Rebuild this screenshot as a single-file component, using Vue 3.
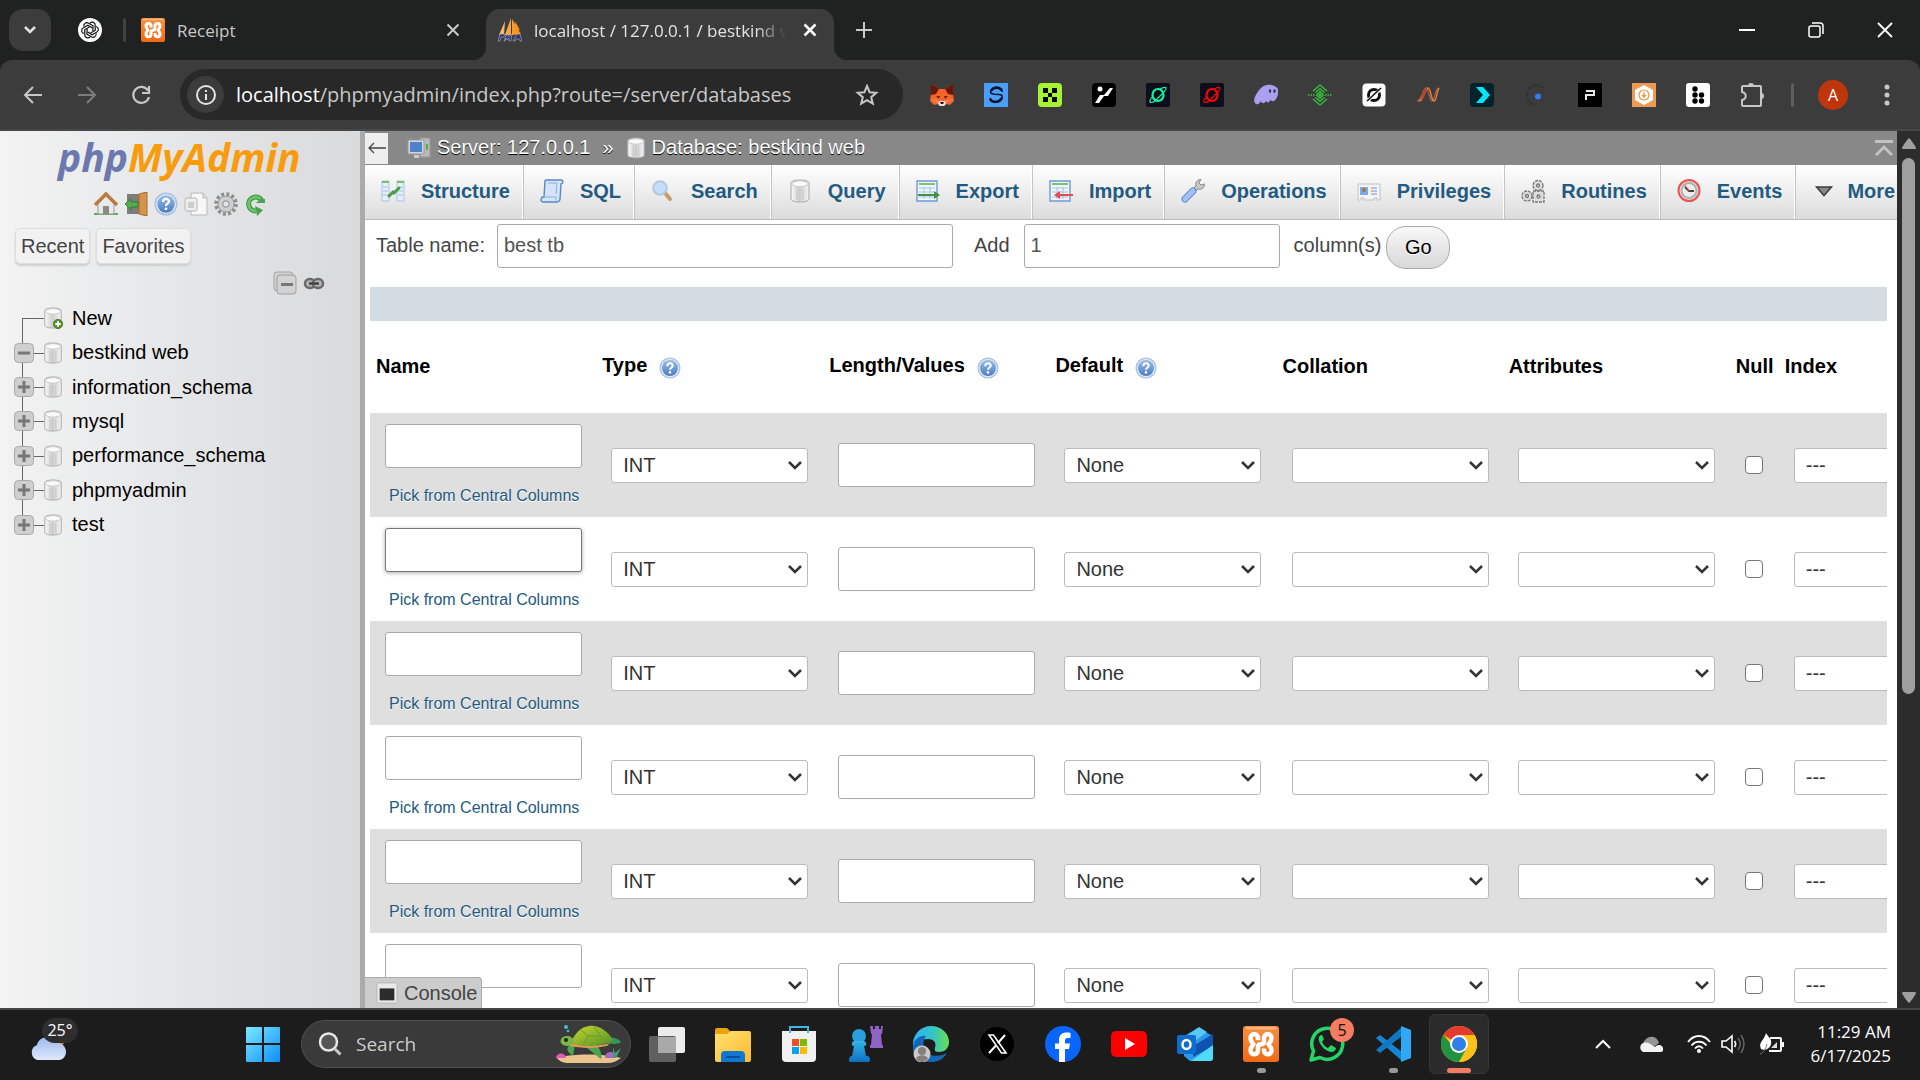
<script setup>
import { ref } from 'vue'

const tableName = ref('best tb')
const addCount = ref('1')

const extensions = ['fox', 'solflare', 'okx', 'slash', 'ringgreen', 'ringred', 'ghost', 'diamond', 'ringwhite', 'wave', 'chevbox', 'crescent', 'pbox', 'hexbox', 'dotsbox', 'puzzle']
const navIcons = [
  { icon: 'home', label: 'Home' },
  { icon: 'exit', label: 'Log out' },
  { icon: 'help', label: 'Documentation' },
  { icon: 'docs', label: 'SQL documentation' },
  { icon: 'gear', label: 'Navigation panel settings' },
  { icon: 'reload', label: 'Reload navigation panel' },
]
const tree = [
  { name: 'New', icon: 'dbnew', toggle: '' },
  { name: 'bestkind web', icon: 'db', toggle: 'minus' },
  { name: 'information_schema', icon: 'db', toggle: 'plus' },
  { name: 'mysql', icon: 'db', toggle: 'plus' },
  { name: 'performance_schema', icon: 'db', toggle: 'plus' },
  { name: 'phpmyadmin', icon: 'db', toggle: 'plus' },
  { name: 'test', icon: 'db', toggle: 'plus' },
]
const tabs = [
  { name: 'Structure', icon: 'structure' },
  { name: 'SQL', icon: 'sql' },
  { name: 'Search', icon: 'search' },
  { name: 'Query', icon: 'db' },
  { name: 'Export', icon: 'export' },
  { name: 'Import', icon: 'import' },
  { name: 'Operations', icon: 'wrench' },
  { name: 'Privileges', icon: 'card' },
  { name: 'Routines', icon: 'routines' },
  { name: 'Events', icon: 'clock' },
  { name: 'More', icon: 'more' },
]
const headers = [
  { name: 'Name' },
  { name: 'Type', help: true },
  { name: 'Length/Values', help: true },
  { name: 'Default', help: true },
  { name: 'Collation' },
  { name: 'Attributes' },
  { name: 'Null' },
  { name: 'Index' },
]
const apps = [
  { icon: 'taskview', label: 'Task View' },
  { icon: 'folder', label: 'File Explorer' },
  { icon: 'store', label: 'Microsoft Store' },
  { icon: 'chess', label: 'Chess' },
  { icon: 'edge', label: 'Edge' },
  { icon: 'x', label: 'X' },
  { icon: 'facebook', label: 'Facebook' },
  { icon: 'youtube', label: 'YouTube' },
  { icon: 'outlook', label: 'Outlook' },
  { icon: 'xampp', label: 'XAMPP', running: true },
  { icon: 'whatsapp', label: 'WhatsApp', badge: '5' },
  { icon: 'vscode', label: 'Visual Studio Code', running: true },
  { icon: 'chrome', label: 'Chrome', active: true },
]
</script>

<template>
  <div class="screen">
    <svg class="defs" aria-hidden="true">
      <defs>
        <linearGradient id="gOrange" x1="0" y1="0" x2="0" y2="1"><stop offset="0" stop-color="#f9903f" /><stop offset="1" stop-color="#f06a14" /></linearGradient>
        <linearGradient id="gDb" x1="0" y1="0" x2="1" y2="0"><stop offset="0" stop-color="#fafafa" /><stop offset=".45" stop-color="#cfcfcf" /><stop offset="1" stop-color="#f2f2f2" /></linearGradient>
        <linearGradient id="gHelp" x1="0" y1="0" x2="0" y2="1"><stop offset="0" stop-color="#9dbde8" /><stop offset="1" stop-color="#4a7cc0" /></linearGradient>
        <linearGradient id="gSail" x1="0" y1="0" x2="1" y2="0"><stop offset="0" stop-color="#f8c27a" /><stop offset="1" stop-color="#f58a07" /></linearGradient>
        <linearGradient id="gWin" x1="0" y1="0" x2="1" y2="1"><stop offset="0" stop-color="#7be9ff" /><stop offset="1" stop-color="#0d8dfb" /></linearGradient>
        <linearGradient id="gFolder" x1="0" y1="0" x2="1" y2="1"><stop offset="0" stop-color="#ffdf73" /><stop offset="1" stop-color="#fbbd2c" /></linearGradient>
        <linearGradient id="gBlue" x1="0" y1="0" x2="0" y2="1"><stop offset="0" stop-color="#35b4e6" /><stop offset="1" stop-color="#0b6cc4" /></linearGradient>
        <linearGradient id="gEdge" x1="0" y1="0" x2="1" y2="0"><stop offset="0" stop-color="#2eb5f0" /><stop offset=".55" stop-color="#33c5c8" /><stop offset="1" stop-color="#6bdf4e" /></linearGradient>
        <linearGradient id="gCloud" x1="0" y1="0" x2="0" y2="1"><stop offset="0" stop-color="#9db9ee" /><stop offset="1" stop-color="#dde9fb" /></linearGradient>
        <linearGradient id="gShell" x1="0" y1="0" x2="1" y2="1"><stop offset="0" stop-color="#c9d92b" /><stop offset="1" stop-color="#4f8f2a" /></linearGradient>
      </defs>
      <symbol id="i-openai" viewBox="0 0 24 24"><circle cx="12" cy="12" r="12" fill="#fff" /><g fill="none" stroke="#111" stroke-width="1.2"><path d="M12 5c2-2 5.500-.5 5.200 2.500v5L12.500 15" /><path d="M12 5c2-2 5.500-.5 5.200 2.500v5L12.500 15" transform="rotate(60 12 12)" /><path d="M12 5c2-2 5.500-.5 5.200 2.500v5L12.500 15" transform="rotate(120 12 12)" /><path d="M12 5c2-2 5.500-.5 5.200 2.500v5L12.500 15" transform="rotate(180 12 12)" /><path d="M12 5c2-2 5.500-.5 5.200 2.500v5L12.500 15" transform="rotate(240 12 12)" /><path d="M12 5c2-2 5.500-.5 5.200 2.500v5L12.500 15" transform="rotate(300 12 12)" /></g></symbol>
      <symbol id="i-xampp" viewBox="0 0 24 24"><rect width="24" height="24" rx="2" fill="url(#gOrange)" /><path d="M2 1.500h20" stroke="#fbb98a" stroke-width="1.500" /><path d="M10 9.500V8c0-3.500-5-3.500-5 0 0 2 1 3 2 4.200-1 1.100-2 2.100-2 4 0 3.500 5 3.500 5 0V14c0-1.200.7-1.800 2-1.800s2-.6 2-1.700V8c0-3.500 5-3.500 5 0 0 2-1 3-2 4.200 1 1.100 2 2.100 2 4 0 3.500-5 3.500-5 0V15" fill="none" stroke="#fff" stroke-width="3" stroke-linejoin="round" /></symbol>
      <symbol id="i-pma" viewBox="0 0 24 24"><path d="M7 3 1 17h5zM13 0 7 17h6zM14 1l9 15-9 1zM17 3l5 9-4-1z" fill="url(#gSail)" /><path d="M2 16h5l-1 3H3l-1 4H0zM9 16l2 3 3-3-1 7h-2v-3l-2 2-1-2-1 3H6zM19 16h3l2 7h-2l-1-2h-3l-1 2h-2z" fill="#34376f" stroke="#c5c7e0" stroke-width=".5" /></symbol>
      <symbol id="i-fox" viewBox="0 0 24 24"><path d="M1 1 9 6h6l8-5v10l1 7-4 4-4-1-2 2h-4l-2-2-4 1-4-4 1-7z" fill="#f5642b" /><path d="M1 1 9 6l-3 5-5 1zM23 1l-8 5 3 5 5 1z" fill="#6b1507" /><path d="M6 13h4l-1 3zM18 13h-4l1 3z" fill="#7c1f08" /><path d="M1 16l7 1 1 4zM23 16l-7 1-1 4z" fill="#fb8455" /><path d="M9 18h6l1 3-2 2h-4l-2-2z" fill="#f2ded2" /><path d="M10 19h4l-1 2h-2z" fill="#161616" /></symbol>
      <symbol id="i-solflare" viewBox="0 0 24 24"><path d="M0 0h24v24H0z" fill="#4a9eff" /><path d="M18.500 9C17 4 8 4 6.500 9c0 2.500 5 2.500 8 2.500 3 0 4.500 1 3.500 3.500-2 5-10 5-12 0" fill="none" stroke="#071426" stroke-width="1.500" /><path d="M7 8C9 4 15 3 18 7.500M6 16c2 4 9 4 12-1" fill="none" stroke="#071426" stroke-width="2.500" /></symbol>
      <symbol id="i-okx" viewBox="0 0 24 24"><rect width="24" height="24" rx="4" fill="#a8f235" /><path d="M5 5h5v5H5zM14 5h5v5h-5zM10 10h4v4h-4zM5 14h5v5H5zM14 14h5v5h-5z" fill="#050805" /></symbol>
      <symbol id="i-slash" viewBox="0 0 24 24"><rect width="24" height="24" rx="4" fill="#000" /><circle cx="8" cy="6" r="2.500" fill="#fff" /><path d="M18 5h3l-5 8h-4l-5 7H3l5-8h4z" fill="#fff" /></symbol>
      <symbol id="i-ringgreen" viewBox="0 0 24 24"><rect width="24" height="24" rx="2" fill="#0c0f1b" /><ellipse cx="12" cy="12" rx="5.500" ry="6" fill="none" stroke="#11f5a4" stroke-width="2.200" /><path d="M14 6C22 2 21 6 17 10L9 18c-5 3-7 1-3-4" fill="none" stroke="#11f5a4" stroke-width="1.200" /></symbol>
      <symbol id="i-ringred" viewBox="0 0 24 24"><rect width="24" height="24" rx="2" fill="#0c0f1b" /><ellipse cx="12" cy="12" rx="5.500" ry="6" fill="none" stroke="#fa0505" stroke-width="2.200" /><path d="M14 6C22 2 21 6 17 10L9 18c-5 3-7 1-3-4" fill="none" stroke="#fa0505" stroke-width="1.200" /></symbol>
      <symbol id="i-ghost" viewBox="0 0 24 24"><path d="M2 21C-2 18 1 12 6 6 10 1 20 0 24 6c1 5-1 10-4 12-2 1-3-1-4-1 0 3-3 3-4 1-2 3-4 3-5 0-1 2-3 4-5 3z" fill="#ab9ff2" /><ellipse cx="16" cy="8" rx="1.200" ry="2" fill="#3c3950" /><ellipse cx="20.500" cy="8" rx="1.200" ry="2" fill="#3c3950" /></symbol>
      <symbol id="i-diamond" viewBox="0 0 24 24"><g fill="none" stroke="#35c13b" stroke-width="1.300"><path d="M5 8l7-6 7 6M7.500 9.500 12 5.500l4.500 4M5 16l7 6 7-6M7.500 14.500l4.500 4 4.500-4M12 8.500l3.500 3.500-3.500 3.500L8.500 12z" /><path d="M0 12h7M17 12h7" stroke-dasharray="1.500 1" /></g><circle cx="12" cy="12" r="1.700" fill="#35c13b" /></symbol>
      <symbol id="i-ringwhite" viewBox="0 0 24 24"><rect width="23" height="23" x=".5" y=".5" rx="4" fill="#fff" /><circle cx="12" cy="12" r="5.500" fill="none" stroke="#111" stroke-width="3" /><path d="M4 19 20 5" stroke="#fff" stroke-width="3" /><path d="M5 18 19 5" stroke="#111" stroke-width="1.600" /></symbol>
      <symbol id="i-wave" viewBox="0 0 24 24"><g fill="none" stroke-width="1.300"><path d="M1 18C6 18 7 5 10 5s3 13 6 13 3-13 7-13" stroke="#c2562f" /><path d="M3 18C8 18 9 5 12 5s3 13 6 13 2-8 5-13" stroke="#e08a54" /><path d="M5 18c3-2 4-12 6-13" stroke="#b83a28" /></g></symbol>
      <symbol id="i-chevbox" viewBox="0 0 24 24"><rect width="24" height="24" rx="4" fill="#03222b" /><path d="M6 4h7l7 8-7 8H6l7-8z" fill="#07e6fa" /></symbol>
      <symbol id="i-crescent" viewBox="0 0 24 24"><path d="M19 5C12-1 3 4 3 12s7 11 10 9" fill="none" stroke="#303236" stroke-width="2" stroke-dasharray="5 1" /><circle cx="14" cy="13.500" r="3" fill="#2e7dfa" /></symbol>
      <symbol id="i-pbox" viewBox="0 0 24 24"><path d="M0 0h24v24H0z" fill="#000" /><path d="M8 8h8v4H8v5" fill="none" stroke="#e8e8e8" stroke-width="2" /></symbol>
      <symbol id="i-hexbox" viewBox="0 0 24 24"><path d="M0 0h24v24H0z" fill="#ee9a55" /><path d="m12 2 9 5v10l-9 5-9-5V7z" fill="#fff" /><circle cx="12" cy="12" r="5" fill="none" stroke="#e8963c" stroke-width="1.200" /><path d="M12 9v5m-2-2 2 2 2-2" fill="none" stroke="#e8963c" stroke-width="1.300" /></symbol>
      <symbol id="i-dotsbox" viewBox="0 0 24 24"><rect width="24" height="24" rx="3" fill="#fff" /><g fill="#000"><circle cx="9" cy="6" r="2.700" /><circle cx="9" cy="12" r="2.700" /><circle cx="15.500" cy="12" r="2.700" /><circle cx="9" cy="18" r="2.700" /><circle cx="15.500" cy="18" r="2.700" /></g></symbol>
      <symbol id="i-puzzle" viewBox="0 0 24 24"><path d="M3 3h17a1 1 0 0 1 1 1v18a1 1 0 0 1-1 1H3a1 1 0 0 1-1-1v-5c5-1 5-7 0-8V4a1 1 0 0 1 1-1z" fill="none" stroke="#c7c7c7" stroke-width="2" /><path d="M8 3a3 3 0 0 1 6 0zM21 10a3 3 0 0 1 0 6z" fill="#c7c7c7" /></symbol>

      <symbol id="i-home" viewBox="0 0 24 24"><path d="M0 21h24v2H0z" fill="#5fae5c" /><path d="M4 12 12 4l8 8v10H4z" fill="#e9e9e9" stroke="#999" /><path d="M9 14h6v8H9z" fill="#8a8a8a" /><path d="m1 13 11-11 11 11" fill="none" stroke="#b97c41" stroke-width="3.500" /></symbol>
      <symbol id="i-exit" viewBox="0 0 24 24"><path d="M3 2h14v20H3z" fill="#7c7c7c" /><path d="m15 2 8-2v24l-8-2z" fill="#d59449" stroke="#a76a2b" /><path d="M1 12 7 7v3h7v5H7v3z" fill="#56ab4f" stroke="#337f30" /></symbol>
      <symbol id="i-help" viewBox="0 0 24 24"><circle cx="12" cy="12" r="11.500" fill="#a8c1e4" /><circle cx="12" cy="12" r="10" fill="#e1ebf8" /><circle cx="12" cy="12" r="8.700" fill="url(#gHelp)" /><path d="M9 10c0-4 6-4 6-.5 0 2-3 2-3 4.500" fill="none" stroke="#fff" stroke-width="2.200" /><circle cx="12" cy="16.800" r="1.400" fill="#fff" /></symbol>
      <symbol id="i-docs" viewBox="0 0 24 24"><path d="M7 1h12l4 5v17H7z" fill="#f7f7f7" stroke="#b9b9b9" /><path d="M19 1v5h4" fill="#ddd" stroke="#b9b9b9" /><rect x="1" y="6" width="12" height="13" rx="2" fill="#eee" stroke="#b5b5b5" /><path d="M5 10v6m2-6v6m2-6v6" stroke="#aaa" /></symbol>
      <symbol id="i-gear" viewBox="0 0 24 24"><circle cx="12" cy="12" r="9.800" fill="none" stroke="#8f8f8f" stroke-width="4" stroke-dasharray="3 2.130" /><circle cx="12" cy="12" r="8" fill="#cfcfcf" stroke="#999" /><circle cx="12" cy="12" r="3.200" fill="#e3e4e6" stroke="#888" /></symbol>
      <symbol id="i-reload" viewBox="0 0 24 24"><path d="M18 9A7 7 0 1 0 12 19" fill="none" stroke="#3b9440" stroke-width="5" /><path d="M18 9A7 7 0 1 0 12 19" fill="none" stroke="#6cc26c" stroke-width="3" /><path d="M12 11h9V7h-5zM11 14l8 4-6 6z" fill="#4aa44c" /></symbol>
      <symbol id="i-db" viewBox="1 0 22 24"><path d="M3 4c0-4 18-4 18 0v16c0 4-18 4-18 0z" fill="url(#gDb)" stroke="#a9a9a9" /><ellipse cx="12" cy="4.800" rx="8" ry="3" fill="#fafafa" stroke="#c9c9c9" /><path d="M9 10v11m3-11v11m3-11v11" stroke="#c4c4c4" /></symbol>
      <symbol id="i-dbnew" viewBox="1 0 22 24"><path d="M3 4c0-4 18-4 18 0v16c0 4-18 4-18 0z" fill="url(#gDb)" stroke="#a9a9a9" /><ellipse cx="12" cy="4.800" rx="8" ry="3" fill="#fafafa" stroke="#c9c9c9" /><circle cx="17.500" cy="18.500" r="5" fill="#57962c" stroke="#3d7418" /><path d="M17.500 15.500v6m-3-3h6" stroke="#fff" stroke-width="2" /></symbol>
      <symbol id="i-minus" viewBox="0 0 20 20"><rect x=".5" y=".5" width="19" height="19" rx="4" fill="#cfcfcf" stroke="#a9a9a9" /><path d="M4 10h12" stroke="#777" stroke-width="3" /></symbol>
      <symbol id="i-plus" viewBox="0 0 20 20"><rect x=".5" y=".5" width="19" height="19" rx="4" fill="#cfcfcf" stroke="#a9a9a9" /><path d="M4 10h12M10 4v12" stroke="#777" stroke-width="3" /></symbol>
      <symbol id="i-collapse" viewBox="0 0 24 24"><rect x="1" y="1" width="19" height="19" rx="3" fill="#d0d0d0" stroke="#a5a5a5" /><rect x="4" y="4" width="19" height="19" rx="3" fill="#d3d3d3" stroke="#a0a0a0" /><path d="M8 13.500h12" stroke="#777" stroke-width="3" /></symbol>
      <symbol id="i-link" viewBox="0 0 24 24"><g fill="#b5b5b5" stroke="#6b6b6b" stroke-width="2.500"><rect x="3" y="8" width="10" height="9" rx="4.500" /><rect x="11" y="8" width="10" height="9" rx="4.500" /></g><path d="M7 12.500h10" stroke="#444" stroke-width="2.500" /></symbol>

      <symbol id="i-server" viewBox="0 0 24 24"><path d="M13 2h10v19H13z" fill="#b9b9b9" stroke="#999" /><path d="M20 8v6" stroke="#55ad4a" stroke-width="2" /><rect x="1" y="4" width="16" height="14" rx="1" fill="#d5d5d5" stroke="#999" /><path d="M3 6h12v10H3z" fill="#4f82cc" /><path d="M7 19h5v3H7z" fill="#ccc" /></symbol>
      <symbol id="i-structure" viewBox="0 0 24 24"><path d="M1 2h7v20H1zM16 2h7v20h-7z" fill="#e6f0fb" stroke="#a9c3e6" /><path d="M1 3h7M16 3h7" stroke="#7fc262" stroke-width="2" /><path d="M2 8h5M2 12h5M2 16h5M17 8h5M17 12h5M17 16h5" stroke="#a5c0e0" /><path d="m8 17 4-4 1 1 5-5" fill="none" stroke="#4a9c48" stroke-width="3" stroke-linecap="round" /></symbol>
      <symbol id="i-sql" viewBox="0 0 24 24"><path d="M5 2c0-1 1-1 2-1h14c3 0 2 4 0 4l-1 15c0 3-2 3-4 3H3c-3 0-2-5 0-5h1z" fill="#d3e5f9" stroke="#5689c8" stroke-width="1.400" /><path d="M3 18h13v4M8 4h9l-1 11" fill="none" stroke="#8ab0df" /></symbol>
      <symbol id="i-search" viewBox="0 0 24 24"><path d="m14 14 5 6" stroke="#c99a64" stroke-width="4" stroke-linecap="round" /><circle cx="9" cy="9" r="6.800" fill="#c4defa" stroke="#b4c8de" stroke-width="2" /></symbol>
      <symbol id="i-export" viewBox="0 0 24 24"><path d="M1 2h20v20H1z" fill="#eef5fd" stroke="#6b9ad6" stroke-width="1.400" /><path d="M3 5h16" stroke="#7cc467" stroke-width="2" /><path d="M3 9h16M3 13h16M3 18h16M8 8v12M14 8v12" stroke="#a9c3e4" /><path d="M2 15h16v-3l6 4-6 4v-3H2z" fill="#3d923c" /></symbol>
      <symbol id="i-import" viewBox="0 0 24 24"><path d="M1 2h20v20H1z" fill="#eef5fd" stroke="#6b9ad6" stroke-width="1.400" /><path d="M3 5h16" stroke="#7cc467" stroke-width="2" /><path d="M3 9h16M3 13h16M3 18h16M8 8v12M14 8v12" stroke="#a9c3e4" /><path d="M24 15H11v-3l-6 4 6 4v-3h13z" fill="#e84a4a" /></symbol>
      <symbol id="i-wrench" viewBox="0 0 24 24"><path d="m11 11 4-4c-1-4 1-6 5-7l-2 4 2 2 4-1c-1 4-3 6-7 5l-4 4z" fill="#c6c6c6" stroke="#888" /><path d="m4 20 8-8" stroke="#5f8cd0" stroke-width="7" stroke-linecap="round" /><path d="m4 20 8-8" stroke="#a4c1f2" stroke-width="5" stroke-linecap="round" /></symbol>
      <symbol id="i-card" viewBox="0 0 24 24"><path d="M1 5h22v16h-3v-2h-3v2H7v-2H4v2H1z" fill="#f4f4f4" stroke="#c2c2c2" /><path d="M3 8h8v8H3z" fill="#76acec" /><circle cx="7" cy="11" r="2" fill="#a8733c" /><path d="M14 9h6M14 12h6M14 15h6" stroke="#9cb4cf" stroke-width="1.500" /></symbol>
      <symbol id="i-routines" viewBox="0 0 24 24"><g fill="#ddd" stroke="#777" stroke-width="1.300"><circle cx="17" cy="6.500" r="5" stroke-dasharray="3 1" /><circle cx="17" cy="6.500" r="1.500" /><circle cx="6" cy="17" r="5" stroke-dasharray="3 1" /><circle cx="6" cy="17" r="1.500" /><rect x="12" y="12" width="11" height="11" stroke-dasharray="3 1" /><circle cx="17.500" cy="17.500" r="1.500" /></g></symbol>
      <symbol id="i-clock" viewBox="0 0 24 24"><circle cx="12" cy="11.500" r="10.500" fill="#dcdcdc" stroke="#ea5350" stroke-width="2" /><circle cx="12" cy="11.500" r="7.500" fill="#ededed" stroke="#b0b0b0" stroke-width="2" /><path d="m8 8 4 4h5" fill="none" stroke="#444" stroke-width="2" /><path d="m12 12-4-6" stroke="#e25552" /></symbol>
      <symbol id="i-more" viewBox="0 0 24 24"><path d="M4.500 8h15L12 16.500z" fill="#8a8a8a" stroke="#3d3d3d" stroke-width="1.500" /></symbol>
      <symbol id="i-console" viewBox="0 0 24 24"><rect x="1" y="1" width="22" height="22" rx="2" fill="#e9e9e9" stroke="#b5b5b5" /><path d="M4 7h16v13H4z" fill="#2c2c2c" /></symbol>

      <symbol id="i-taskview" viewBox="0 0 36 36"><rect x="9" y="1" width="27" height="26" rx="2" fill="#ececec" /><rect y="10" width="27" height="26" rx="2" fill="#5f5f5f" /><path d="M9 11h18v16H9z" fill="#a9a9a9" /></symbol>
      <symbol id="i-folder" viewBox="0 0 36 36"><path d="M0 4a2 2 0 0 1 2-2h10l4 4v10H0z" fill="#e8a50a" /><path d="M12 8l4-3h18a2 2 0 0 1 2 2v27a2 2 0 0 1-2 2H2a2 2 0 0 1-2-2V8z" fill="url(#gFolder)" /><path d="M6 36v-7a4 4 0 0 1 4-4h16a4 4 0 0 1 4 4v7z" fill="#1275cf" /><path d="M11 31h14" stroke="#07509b" stroke-width="2" /></symbol>
      <symbol id="i-store" viewBox="0 0 36 36"><path d="M9 7V1h18v6" fill="none" stroke="#3cb6e8" stroke-width="2" /><path d="M1 5h34v27a4 4 0 0 1-4 4H5a4 4 0 0 1-4-4z" fill="#f1f1f1" /><path d="M9 1v6M27 1v6" stroke="#3cb6e8" stroke-width="2" /><path d="M11 13h7v7h-7z" fill="#f25022" /><path d="M19 13h7v7h-7z" fill="#7fba00" /><path d="M11 21h7v7h-7z" fill="#00a4ef" /><path d="M19 21h7v7h-7z" fill="#ffb900" /></symbol>
      <symbol id="i-chess" viewBox="0 0 36 36"><path d="M23 0h3v3h2V0h4v3h2V0h2l-1 8h-1l1 11h1v3H23v-3h1l1-11h-1z" fill="#8f62c6" /><circle cx="12" cy="10" r="7" fill="#2b9fdc" /><path d="M7 15h10c3 1 3 5 0 5l2 10h2a4 4 0 0 1 0 7H4a4 4 0 0 1 0-7h1l2-10c-3 0-3-4 0-5z" fill="url(#gBlue)" /></symbol>
      <symbol id="i-edge" viewBox="0 0 36 36"><path d="M0 18C0 8 8 0 18 0s18 7 18 16c0 6-4 10-10 10-3 0-5-1-4-4 2-6-2-9-7-9C7 13 2 16 0 24z" fill="url(#gEdge)" /><path d="M0 21C1 12 8 9 13 10c-4 4-4 16 5 19 6 2 12 0 16-2-4 7-10 9-16 9C8 36-1 29 0 21z" fill="#1467b6" /><circle cx="9" cy="28" r="8.500" fill="#cbc9c7" /><circle cx="9" cy="25" r="4" fill="#84807d" /><path d="M3 33c1-5 11-5 12 0-3 4-9 4-12 0z" fill="#84807d" /></symbol>
      <symbol id="i-x" viewBox="0 0 36 36"><circle cx="18" cy="18" r="17" fill="#000" /><path d="M10 9h4.500L27 27h-4.500z" fill="none" stroke="#fff" stroke-width="1.600" /><path d="M26 9l-7 8M17 19.500 10 27" stroke="#fff" stroke-width="2" /></symbol>
      <symbol id="i-facebook" viewBox="0 0 36 36"><circle cx="18" cy="18" r="18" fill="#0866ff" /><path d="M14 36V23h-4v-5.500h4V14c0-5 3-7.500 7.500-7.500 1.500 0 3 .2 4 .4V12h-2.500c-2.500 0-3 1.200-3 3v2.500h5L24 23h-4v13z" fill="#fff" /></symbol>
      <symbol id="i-youtube" viewBox="0 0 36 36"><rect y="5" width="36" height="26" rx="5" fill="#f00" /><path d="m14 12 10 6-10 6z" fill="#fff" /></symbol>
      <symbol id="i-outlook" viewBox="0 0 36 36"><path d="m7 10 14-8 15 8v22a3 3 0 0 1-3 3H13l-6-5z" fill="#2a9be8" /><path d="m12 8 10-7 8 5-16 12z" fill="#5ac8f5" /><path d="m16 20 20-12v12L16 31z" fill="#0f53ae" /><path d="M14 35 36 19v13a3 3 0 0 1-3 3z" fill="#4fdcf5" /><rect y="9" width="19" height="19" rx="2" fill="#0f6cd0" /><ellipse cx="9.500" cy="18.500" rx="4" ry="4.500" fill="none" stroke="#fff" stroke-width="2.500" /></symbol>
      <symbol id="i-whatsapp" viewBox="0 0 36 36"><path d="M2 34l2.500-9A15.500 15.500 0 1 1 11 31.500z" fill="none" stroke="#25d366" stroke-width="3.500" stroke-linejoin="round" /><path d="M12 9c-2 1-3 3-2 6 2 6 7 10 12 11 3 0 5-2 5-4l-5-3-3 3c-3-1-5-4-6-6l2-3-2-4z" fill="#25d366" /></symbol>
      <symbol id="i-vscode" viewBox="0 0 36 36"><path d="M1 12 5 9l22 17v9z" fill="#1486d3" /><path d="M1 24l4 3L27 10V1z" fill="#0f78c2" /><path d="m26 0 10 4v28l-10 4z" fill="#2fa8f5" /></symbol>
      <symbol id="i-chrome" viewBox="0 0 36 36"><circle cx="18" cy="18" r="18" fill="#fbc116" /><path d="M18 18 2.400 9A18 18 0 0 1 33.600 9z" fill="#e33b2e" /><path d="M18 18H10L2.400 9A18 18 0 0 0 18 36l8-14z" fill="#229342" /><path d="M18 9h15.600L18 18z" fill="#e33b2e" /><path d="M25.800 22.500 18 36a18 18 0 0 0 15.600-27H18z" fill="#fbc116" /><circle cx="18" cy="18" r="9" fill="#fff" /><circle cx="18" cy="18" r="7" fill="#2f7de9" /></symbol>
    </svg>

    <header class="tabstrip">
      <button class="tabsearch" aria-label="Search tabs"><svg width="14" height="10" viewBox="0 0 14 10"><path d="m2 2 5 5 5-5" fill="none" stroke="#e3e3e3" stroke-width="2.500" /></svg></button>
      <div class="pinned"><svg width="24" height="24"><use href="#i-openai" /></svg></div>
      <div class="tab">
        <svg width="24" height="24"><use href="#i-xampp" /></svg>
        <span class="tabtitle">Receipt</span>
        <button class="tabclose" aria-label="Close tab"><svg width="14" height="14" viewBox="0 0 14 14"><path d="m1.500 1.500 11 11m0-11-11 11" stroke="#c9c9c9" stroke-width="2" /></svg></button>
      </div>
      <div class="tab active">
        <svg width="24" height="24"><use href="#i-pma" /></svg>
        <span class="tabtitle">localhost / 127.0.0.1 / bestkind web</span>
        <button class="tabclose" aria-label="Close tab"><svg width="14" height="14" viewBox="0 0 14 14"><path d="m1.500 1.500 11 11m0-11-11 11" stroke="#fff" stroke-width="2.500" /></svg></button>
      </div>
      <button class="newtab" aria-label="New tab"><svg width="16" height="16" viewBox="0 0 16 16"><path d="M8 0v16M0 8h16" stroke="#c9c9c9" stroke-width="2" /></svg></button>
      <div class="winctl">
        <button aria-label="Minimize"><svg width="16" height="16" viewBox="0 0 16 16"><path d="M0 8h16" stroke="#fff" stroke-width="2" /></svg></button>
        <button aria-label="Restore"><svg width="16" height="16" viewBox="0 0 16 16"><g fill="none" stroke="#fff" stroke-width="1.500"><rect x="1" y="4" width="11" height="11" rx="2" /><path d="M4 1h8a3 3 0 0 1 3 3v8" /></g></svg></button>
        <button aria-label="Close"><svg width="16" height="16" viewBox="0 0 16 16"><path d="m1 1 14 14m0-14L1 15" stroke="#fff" stroke-width="1.800" /></svg></button>
      </div>
    </header>

    <div class="toolbar">
      <button class="nav" aria-label="Back"><svg width="20" height="20" viewBox="0 0 20 20"><path d="M19 10H2m8-8-8 8 8 8" fill="none" stroke="#c7c7c7" stroke-width="2" /></svg></button>
      <button class="nav" aria-label="Forward"><svg width="20" height="20" viewBox="0 0 20 20"><path d="M1 10h17m-8-8 8 8-8 8" fill="none" stroke="#7d7d7d" stroke-width="2" /></svg></button>
      <button class="nav" aria-label="Reload"><svg width="20" height="20" viewBox="0 0 20 20"><path d="M17 5.500A8 8 0 1 0 18 12M18 1v7h-7" fill="none" stroke="#c7c7c7" stroke-width="2.200" /></svg></button>
      <div class="omnibox">
        <span class="info"><svg width="22" height="22" viewBox="0 0 22 22"><circle cx="11" cy="11" r="9" fill="none" stroke="#e3e3e3" stroke-width="2" /><path d="M11 10v6M11 6v2" stroke="#e3e3e3" stroke-width="2" /></svg></span>
        <span class="url"><b>localhost</b>/phpmyadmin/index.php?route=/server/databases</span>
        <svg width="24" height="24" viewBox="0 0 24 24"><path d="m12 3 2.600 6.200 6.700.6-5.100 4.400 1.600 6.500-5.800-3.500-5.800 3.500 1.600-6.500L2.700 9.800l6.700-.6z" fill="none" stroke="#c7c7c7" stroke-width="2" /></svg>
      </div>
      <div class="exts">
        <button v-for="e in extensions" :key="e" class="ext" :aria-label="e"><svg width="24" height="24"><use :href="'#i-' + e" /></svg></button>
      </div>
      <span class="tbsep"></span>
      <button class="avatar">A</button>
      <button class="kebab" aria-label="Menu"><svg width="6" height="22" viewBox="0 0 6 22"><g fill="#c7c7c7"><circle cx="3" cy="3" r="2.500" /><circle cx="3" cy="11" r="2.500" /><circle cx="3" cy="19" r="2.500" /></g></svg></button>
    </div>

    <div class="page">
      <aside class="sidebar">
        <a href="#" class="logo"><span>php</span>MyAdmin</a>
        <div class="navicons">
          <a v-for="n in navIcons" :key="n.icon" href="#" :aria-label="n.label"><svg width="24" height="24"><use :href="'#i-' + n.icon" /></svg></a>
        </div>
        <div class="quick"><button>Recent</button><button>Favorites</button></div>
        <div class="treetools">
          <a href="#" aria-label="Collapse all"><svg width="24" height="24"><use href="#i-collapse" /></svg></a>
          <a href="#" aria-label="Unlink from main panel"><svg width="24" height="24"><use href="#i-link" /></svg></a>
        </div>
        <ul class="tree">
          <li v-for="t in tree" :key="t.name">
            <span class="toggle"><svg v-if="t.toggle" width="20" height="20"><use :href="'#i-' + t.toggle" /></svg></span>
            <svg class="dbicon" width="22" height="22"><use :href="'#i-' + t.icon" /></svg>
            <a href="#">{{ t.name }}</a>
          </li>
        </ul>
      </aside>
      <div class="resizer"></div>

      <main class="main">
        <div class="crumbs">
          <button class="hide" aria-label="Hide panel"><svg width="20" height="12" viewBox="0 0 20 12"><path d="M19 6H2m5-5L2 6l5 5" fill="none" stroke="#444" stroke-width="1.300" /></svg></button>
          <svg width="24" height="24"><use href="#i-server" /></svg>
          <a href="#">Server: 127.0.0.1</a>
          <span class="sep">»</span>
          <svg width="20" height="22"><use href="#i-db" /></svg>
          <a href="#">Database: bestkind web</a>
          <svg class="totop" width="18" height="16" viewBox="0 0 18 16"><path d="M0 1.500h18M1 15l8-8 8 8" fill="none" stroke="#c2c2c2" stroke-width="3" /></svg>
        </div>
        <nav class="tabs">
          <a v-for="t in tabs" :key="t.name" href="#"><svg width="24" height="24"><use :href="'#i-' + t.icon" /></svg>{{ t.name }}</a>
        </nav>
        <form class="tableform" @submit.prevent>
          <label for="tname">Table name:</label>
          <input id="tname" v-model="tableName" class="field tname" type="text" />
          <label for="addn" class="addlabel">Add</label>
          <input id="addn" v-model="addCount" class="field addn" type="text" />
          <span class="cols">column(s)</span>
          <button class="go">Go</button>
        </form>
        <div class="tablewrap">
          <div class="caption"></div>
          <table>
            <colgroup><col class="wa" /><col class="wb" /><col class="wa" /><col class="wb" /><col class="wa" /><col class="wb" /><col class="wnull" /><col class="wa" /></colgroup>
            <thead>
              <tr>
                <th v-for="h in headers" :key="h.name" scope="col">{{ h.name }}<svg v-if="h.help" class="hq" width="22" height="22"><use href="#i-help" /></svg></th>
              </tr>
            </thead>
            <tbody>
              <tr v-for="r in 6" :key="r">
                <td class="namecell">
                  <input class="field" :class="{ hover: r === 2 }" type="text" aria-label="Name" />
                  <a href="#">Pick from Central Columns</a>
                </td>
                <td><span class="sel"><select aria-label="Type"><option>INT</option></select><svg width="14" height="10" viewBox="0 0 14 10"><path d="m1 2 6 6 6-6" /></svg></span></td>
                <td><input class="field" type="text" aria-label="Length/Values" /></td>
                <td><span class="sel"><select aria-label="Default"><option>None</option></select><svg width="14" height="10" viewBox="0 0 14 10"><path d="m1 2 6 6 6-6" /></svg></span></td>
                <td><span class="sel"><select aria-label="Collation"><option></option></select><svg width="14" height="10" viewBox="0 0 14 10"><path d="m1 2 6 6 6-6" /></svg></span></td>
                <td><span class="sel"><select aria-label="Attributes"><option></option></select><svg width="14" height="10" viewBox="0 0 14 10"><path d="m1 2 6 6 6-6" /></svg></span></td>
                <td><input class="check" type="checkbox" aria-label="Null" /></td>
                <td><span class="sel"><select aria-label="Index"><option>---</option></select></span></td>
              </tr>
            </tbody>
          </table>
        </div>
        <button class="console"><svg width="22" height="22"><use href="#i-console" /></svg>Console</button>
      </main>

      <div class="scrollbar">
        <svg width="14" height="11" viewBox="0 0 14 11"><path d="M7 0c1 0 7 9 7 10s-1 1-1 1H1s-1 0-1-1S6 0 7 0z" fill="#9f9f9f" /></svg>
        <div class="track"><div class="thumb"></div></div>
        <svg width="14" height="11" viewBox="0 0 14 11"><path d="M7 11c1 0 7-9 7-10s-1-1-1-1H1S0 0 0 1s6 10 7 10z" fill="#9f9f9f" /></svg>
      </div>
    </div>

    <footer class="taskbar">
      <div class="weather">
        <svg width="38" height="26" viewBox="0 0 38 26"><circle cx="30" cy="5" r="6" fill="#f07d1c" /><path d="M8 25a8 8 0 0 1 0-15C10 1 22-1 25 8c8-1 12 4 12 9s-4 8-7 8z" fill="url(#gCloud)" /></svg>
        <span>25°</span>
      </div>
      <button class="start" aria-label="Start"><svg width="36" height="36" viewBox="0 0 36 36"><path d="M1 2q0-1 1-1h15v16H1zM19 1h15q1 0 1 1v15H19zM1 19h16v17H2q-1 0-1-1zM19 19h16v16q0 1-1 1H19z" fill="url(#gWin)" /></svg></button>
      <div class="searchbox">
        <svg width="24" height="24" viewBox="0 0 24 24"><circle cx="10.500" cy="10" r="8.500" fill="#555" stroke="#e6e6e6" stroke-width="2.500" /><path d="m16.500 16.500 6 6" stroke="#c9c9c9" stroke-width="3" /></svg>
        <input type="text" placeholder="Search" aria-label="Search" />
        <svg width="66" height="40" viewBox="0 0 66 40"><path d="M1 34c18-5 48-4 64 0-4 3-8 5-14 5H13C7 39 3 37 1 34z" fill="#ecc48d" /><path d="M46 13c8 0 15 0 19 5-5 4-13 1-19-1z" fill="#2f9a55" /><path d="M14 20c-5 6-2 8 3 12l2-12zM26 19c6 6 14 12 19 16 2-6-3-12-7-18z" fill="#4aa84c" /><path d="M15 18c2 6 36 5 42-2C51 6 42 1 33 2c-9 1-14 8-18 16z" fill="url(#gShell)" /><path d="M25 6l7 6-5 9M32 12h13l5 6M38 3l7 9" fill="none" stroke="#6e9b20" /><path d="M14 19c10 3 22 5 40 0l-3 3c-14 3-28 2-37 0z" fill="#e0995a" /><ellipse cx="11" cy="17" rx="6.500" ry="5" fill="#7db447" /><circle cx="10" cy="16" r="2" fill="#172b15" /><circle cx="10" cy="3" r="2" fill="#4db6e2" /><circle cx="12" cy="7" r="1.300" fill="#4db6e2" /><path d="M0 34c0-6 10-6 10 0z" fill="#e05ab5" /><path d="M49 34c0-8 11-8 11 0z" fill="#a968c9" /><path d="m60 34 5-10-6 5-2-6v11z" fill="#3f9f74" /></svg>
      </div>
      <div class="apps">
        <button v-for="a in apps" :key="a.icon" class="app" :class="{ current: a.active, running: a.running }" :aria-label="a.label">
          <svg width="36" height="36"><use :href="'#i-' + a.icon" /></svg>
          <span v-if="a.badge" class="badge">{{ a.badge }}</span>
        </button>
      </div>
      <div class="tray">
        <svg width="16" height="10" viewBox="0 0 16 10"><path d="m1 9 7-7 7 7" fill="none" stroke="#fff" stroke-width="2" /></svg>
        <svg class="onedrive" width="26" height="18" viewBox="0 0 26 18"><path d="M5 10C6 1 18-2 21 8l-8 6z" fill="#949494" /><path d="M5 17a5 5 0 0 1 0-9c6-2 9 3 12 4 4-4 9-1 8 3 0 2-2 2-3 2z" fill="#f2f2f2" /></svg>
        <svg class="wifi" width="24" height="18" viewBox="0 0 24 18"><g fill="none" stroke="#fff" stroke-width="1.800"><path d="M1 7C7-1 17-1 23 7M4.500 10.500c4-5 11-5 15 0M8 13.500c2.500-3 5.500-3 8 0" /></g><circle cx="12" cy="16" r="2" fill="#fff" /></svg>
        <svg class="vol" width="24" height="20" viewBox="0 0 24 20"><path d="M1 7h4l6-5v16l-6-5H1z" fill="none" stroke="#fff" stroke-width="1.600" /><path d="M13.500 7c1.500 2 1.500 4 0 6" fill="none" stroke="#fff" stroke-width="1.600" /><path d="M17 4c3 4 3 8 0 12M20 1c4 6 4 12 0 18" fill="none" stroke="#666" stroke-width="1.400" /></svg>
        <svg class="batt" width="25" height="22" viewBox="0 0 25 22"><path d="M11 5h10q1 0 1 1v11q0 1-1 1H10M24 9v5" fill="none" stroke="#fff" stroke-width="2" /><path d="M7 0c3 5 6 6 5 11-1 5-7 7-10 5C-1 9 5 8 7 0z" fill="#fff" /><path d="M1 21c3-1 6-5 7-10" fill="none" stroke="#777" /><path d="m12 15 6-6v6z" fill="#ddd" /></svg>
        <div class="time"><span>11:29 AM</span><span>6/17/2025</span></div>
      </div>
    </footer>
  </div>
</template>

<style>
body { margin: 0; background: #1c1c1c; }
</style>

<style scoped>
.screen { height: 100vh; display: flex; flex-direction: column; overflow: hidden; background: #202221; font-family: "Liberation Sans", Arial, sans-serif; font-size: 20px; color: #444; }
.screen * { box-sizing: border-box; }
.defs { position: absolute; width: 0; height: 0; }
svg { display: block; flex: none; }
button { border: 0; padding: 0; background: none; font: inherit; color: inherit; display: flex; align-items: center; justify-content: center; }
a { text-decoration: none; color: inherit; }

.tabstrip { flex: none; height: 60px; background: #202221; display: flex; padding-left: 9px; font-family: "Open Sans", "Noto Sans", sans-serif; font-size: 17px; color: #c9c9c9; }
.tabsearch { width: 42px; height: 42px; margin-top: 9px; border-radius: 14px; background: #3c3c3c; }
.pinned { width: 78px; display: flex; align-items: center; justify-content: center; }
.tab { position: relative; display: flex; align-items: center; width: 357px; padding: 0 12px; }
.tab:not(.active)::before { content: ""; width: 3px; height: 24px; background: #3f4140; margin: 0 15px 0 -18px; border-radius: 2px; }
.tab.active { width: 348px; margin-top: 9px; padding-bottom: 9px; background: #3c3c3c; border-radius: 14px 14px 0 0; color: #e3e3e3; }
.tab.active::before, .tab.active::after { content: ""; position: absolute; bottom: 0; width: 14px; height: 14px; }
.tab.active::before { left: -14px; background: radial-gradient(circle at 0 0, #202221 14px, #3c3c3c 15px); }
.tab.active::after { right: -14px; background: radial-gradient(circle at 100% 0, #202221 14px, #3c3c3c 15px); }
.tabtitle { flex: 1; margin: 0 12px; padding-top: 2px; white-space: nowrap; overflow: hidden; line-height: 24px; }
.tab.active .tabtitle { mask-image: linear-gradient(90deg, #000 88%, transparent); }
.tabclose { width: 24px; height: 24px; }
.tab:not(.active) .tabclose { margin-right: 9px; }
.newtab { width: 60px; }
.winctl { margin-left: auto; display: flex; padding-right: 1px; }
.winctl button { width: 69px; }

.toolbar { flex: none; height: 71px; background: #3c3c3c; border-bottom: 2px solid #474747; border-radius: 12px 12px 0 0; display: flex; align-items: center; padding: 0 30px 0 6px; font-family: "Open Sans", "Noto Sans", sans-serif; }
.nav { width: 54px; height: 48px; }
.omnibox { flex: 1; height: 51px; margin: 0 12px; border-radius: 26px; background: #282828; display: flex; align-items: center; padding: 0 24px 0 7px; }
.info { width: 37px; height: 37px; border-radius: 50%; background: #3c3c3c; display: flex; align-items: center; justify-content: center; }
.url { flex: 1; margin-left: 12px; font-size: 20px; line-height: 28px; color: #c7c7c7; white-space: nowrap; }
.url b { font-weight: 400; color: #fff; }
.exts { display: flex; }
.ext { width: 54px; height: 40px; }
.tbsep { width: 3px; height: 24px; margin: 0 24px 0 12px; background: #5e5e5e; border-radius: 2px; }
.avatar { width: 30px; height: 30px; border-radius: 50%; background: #bf360c; color: #fff; font-size: 16px; }
.kebab { width: 6px; margin-left: 36px; }

.page { flex: 1; min-height: 0; display: flex; background: #fff; }
.sidebar { flex: none; width: 360px; background: linear-gradient(90deg, #f3f3f3, #e5e6e8 50%, #d9dadc); overflow: hidden; }
.logo { display: block; height: 51px; margin: 4px 0 0 58px; font: italic 700 39px/43px "Open Sans", "Noto Sans", sans-serif; color: #f89c0e; }
.logo span { color: #6c78af; }
.navicons { display: flex; gap: 6px; margin: 6px 0 0 94px; }
.quick { display: flex; gap: 6px; margin: 12px 0 0 15px; }
.quick button { height: 36px; padding: 0 5px; border: 1px solid #dcdddd; border-radius: 5px; background: #f2f2f2; box-shadow: 0 2px 2px #cfcfcf; }
.treetools { display: flex; gap: 5px; justify-content: flex-end; margin: 7px 34px 0 0; }
.tree { list-style: none; margin: 6px 0 0; padding: 0; height: 241px; display: flex; flex-direction: column; color: #000; }
.tree li { flex: 1; display: flex; align-items: center; position: relative; padding-left: 14px; }
.tree li::before { content: ""; position: absolute; left: 22px; top: 0; bottom: 0; border-left: 1px solid #666; }
.tree li:first-child::before { top: 50%; }
.tree li:last-child::before { bottom: 50%; }
.tree li::after { content: ""; position: absolute; left: 22px; width: 22px; top: 50%; border-top: 1px solid #666; }
.toggle { width: 20px; position: relative; z-index: 1; }
.dbicon { margin: 0 8px; position: relative; z-index: 1; }
.resizer { flex: none; width: 5px; background: #aaa; }

.main { flex: 1; min-width: 0; overflow: hidden; position: relative; }
.crumbs { height: 34px; background: #888; display: flex; align-items: center; color: #fff; text-shadow: 0 1px 0 #000; }
.crumbs a { margin-left: 6px; line-height: 30px; padding-bottom: 2px; }
.hide { width: 23px; height: 31px; background: #eee; margin-right: 19px; }
.sep { margin: 0 12px; line-height: 30px; padding-bottom: 2px; }
.totop { margin-left: auto; margin-right: 4px; }
.tabs { display: flex; height: 55px; background: linear-gradient(#fff, #dcdcdc); border-bottom: 1px solid #bbb; overflow: hidden; }
.tabs a { flex: none; display: flex; align-items: center; padding: 0 12px 2px 16px; border-right: 1px solid #fff; border-left: 1px solid #c4c4c4; font-weight: 700; color: #235a81; }
.tabs a:first-child { border-left: 0; }
.tabs svg { margin-right: 16px; }
.tabs a:last-child { padding-right: 0; border-right: 0; }
.tabs a:last-child svg { margin-right: 11px; }
.tableform { display: flex; align-items: center; height: 51px; padding: 0 0 0 11px; }
.tableform label, .cols { line-height: 24px; padding-bottom: 1px; }
.field { display: block; width: 197px; height: 44px; padding: 6px; border: 1px solid #aaa; border-radius: 3px; background: #fff; color: #555; font: inherit; outline: 0; }
.field.hover { border-color: #777; box-shadow: 0 1px 4px #aaa; }
.tableform .field { padding-bottom: 7px; }
.tname { width: 456px; margin-left: 12px; }
.addlabel { margin-left: 21px; }
.tableform .addn { width: 256px; margin: 0 14px; }
.go { width: 64px; height: 43px; margin: 4px 0 0 5px; border: 1px solid #aaa; border-radius: 20px; background: linear-gradient(#f8f8f8, #d8d8d8); color: #000; text-shadow: 0 1px 0 #fff; }
.tablewrap { margin: 16px 10px 0 5px; overflow: hidden; }
.caption { height: 34px; background: #d3dce3; }
table { width: 1635px; table-layout: fixed; border-collapse: collapse; }
.wa { width: 226px; }
.wb { width: 227px; }
.wnull { width: 49px; }
th { height: 92px; padding: 0 0 1px 6px; text-align: left; color: #000; white-space: nowrap; }
.hq { display: inline-block; margin-left: 12px; vertical-align: -7px; }
td { height: 104px; padding: 0 0 0 15px; }
tbody tr:nth-child(odd) { background: #dfdfdf; }
.namecell { vertical-align: top; padding-top: 11px; }
.namecell a { display: block; margin: 16px 0 0 4px; font-size: 16px; line-height: 24px; color: #235a81; text-shadow: 0 1px 0 #fff; }
.sel { position: relative; display: block; width: 197px; }
.sel select { appearance: none; display: block; width: 100%; height: 35px; padding: 0 11px; border: 1px solid #bbb; border-radius: 3px; background: #fff; color: #333; font: inherit; }
.sel svg { position: absolute; right: 6px; top: 12px; pointer-events: none; }
.sel path { fill: none; stroke: #333; stroke-width: 2.5; }
.check { appearance: none; display: block; width: 18px; height: 18px; margin: 0; border: 1px solid #767676; border-radius: 4px; background: #fff; }
.console { position: absolute; left: 0; bottom: 0; height: 31px; padding: 0 4px 0 11px; gap: 6px; background: #ccc; border: 1px solid #aaa; border-width: 1px 1px 0 0; border-radius: 0 4px 0 0; }

.scrollbar { flex: none; width: 23px; background: #2c2c2c; display: flex; flex-direction: column; align-items: center; padding: 7px 0 5px; }
.track { flex: 1; width: 13px; margin: 9px 0; }
.thumb { height: 65%; border-radius: 7px; background: #9f9f9f; }

.taskbar { flex: none; height: 72px; background: #1c1c1c; border-top: 2px solid #444; padding-bottom: 2px; display: flex; align-items: center; color: #fff; font-family: "Open Sans", "Noto Sans", sans-serif; font-size: 17px; }
.weather { position: relative; width: 216px; padding: 8px 0 0 29px; }
.weather span { position: absolute; left: 42px; top: -9px; width: 36px; line-height: 25px; border-radius: 13px; background: #2e2e2e; text-align: center; font-size: 16px; }
.start { width: 66px; margin: 0 5px 0 14px; }
.searchbox { width: 330px; height: 48px; border-radius: 24px; background: #3a3a3a; border: 1px solid #505050; display: flex; align-items: center; padding: 0 8px 0 16px; }
.searchbox input { flex: 1; min-width: 0; margin-left: 14px; padding: 0; border: 0; outline: 0; background: none; color: #ccc; font: inherit; font-size: 19px; }
.searchbox input::placeholder { color: #ccc; opacity: 1; }
.apps { display: flex; gap: 6px; margin-left: 6px; }
.app { position: relative; width: 60px; height: 60px; border-radius: 6px; }
.app.current { background: #2b2b2b; border: 1px solid #363636; }
.app.running::after, .app.current::after { content: ""; position: absolute; bottom: 1px; width: 9px; height: 5px; border-radius: 3px; background: #999; }
.app.current::after { width: 24px; bottom: 0; background: #f47c62; }
.badge { position: absolute; right: 3px; top: 4px; width: 24px; line-height: 24px; border-radius: 50%; background: #f47c62; color: #111; font-size: 16px; text-align: center; }
.tray { margin-left: auto; display: flex; align-items: center; padding-right: 29px; }
.onedrive { margin-left: 27px; }
.wifi { margin-left: 23px; }
.vol { margin-left: 10px; }
.batt { margin-left: 14px; }
.time { margin-left: 26px; display: flex; flex-direction: column; text-align: right; line-height: 24px; }
</style>
